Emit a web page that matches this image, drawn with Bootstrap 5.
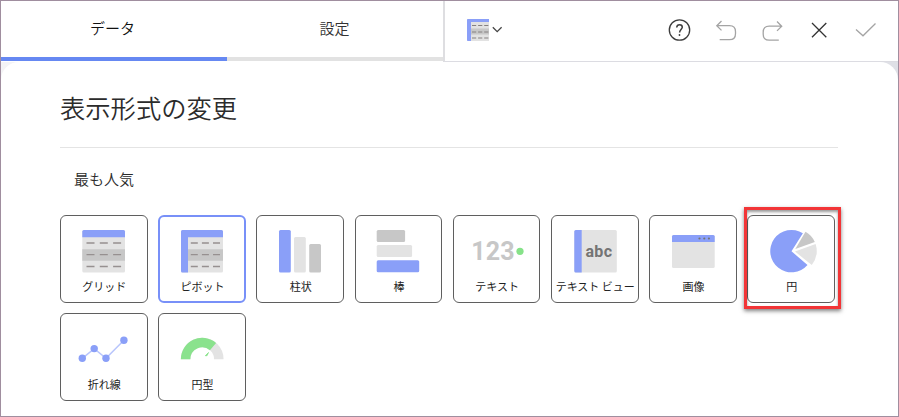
<!DOCTYPE html>
<html lang="ja">
<head>
<meta charset="utf-8">
<meta name="viewport" content="width=device-width, initial-scale=1">
<title>表示形式の変更</title>
<link href="https://cdn.jsdelivr.net/npm/bootstrap@5.3.0/dist/css/bootstrap.min.css" rel="stylesheet">
<style>
  body { font-family: "Noto Sans CJK JP", "Noto Sans", sans-serif; color: #2b2b2b; background: #fff; }
  .editor { width: 899px; height: 417px; border: 1px solid #a08e9f; background: linear-gradient(90deg, #f4f4f6 50%, #dfe0e6 50%); }
  .topbar { height: 61px; }
  .tabs { width: 442px; }
  .tabs .nav-link { height: 60px; padding: 0 0 3px; border-radius: 0; border-bottom: 4px solid #e2e2e2; font-size: 15px; line-height: 53px; color: #333; font-weight: 350; text-align: center; }
  .tabs .nav-link.active { background: none; color: #111; border-bottom-color: #6688f2; }
  .tab-data { width: 226px; padding-right: 3px !important; }
  .tab-settings { width: 216px; padding-right: 1px !important; }
  .tools { border-left: 2px solid #dedee1; border-bottom: 1px solid #dcdce2; }
  .tool { border: 0; background: none; padding: 0; line-height: 0; }
  .panel { height: 354px; border-radius: 18px 18px 0 0; padding: 0 59px; }
  .panel h1 { font-size: 25.3px; line-height: 36px; font-weight: 350; margin: 27px 0 0 0; }
  .rule { height: 1px; background: #e4e4e4; width: 778px; margin-top: 22px; }
  .panel h2 { font-size: 15px; line-height: 22px; font-weight: 350; margin: 20px 0 25px 14px; }
  .tiles { display: grid; grid-template-columns: repeat(8, 87.7px); gap: 10.5px; }
  .tile { position: relative; display: flex; flex-direction: column; align-items: center; height: 87.7px; border: 1px solid #5f5f5f; border-radius: 6px; padding: 0; background: #fff; color: #222; font-size: 11px; line-height: 20px; white-space: nowrap; }
  .tile svg { display: block; flex: none; width: 86px; height: 60px; }
  .tile span { padding-left: 1px; }
  .tile.selected { border: 2px solid #7890f8; }
  .tile.selected svg { margin-top: -1px; }
  .callout { position: absolute; left: -4px; top: -9px; width: 97px; height: 102px; border: 3px solid #f23537; box-shadow: 0 2px 4px rgba(0,0,0,.5), inset 0 2px 3px rgba(0,0,0,.4); pointer-events: none; }
</style>
<script src="https://cdn.jsdelivr.net/npm/bootstrap@5.3.0/dist/js/bootstrap.bundle.min.js"></script>
</head>
<body class="overflow-hidden">
<div class="editor overflow-hidden">
  <header class="topbar d-flex bg-white">
    <nav class="tabs nav flex-nowrap">
      <a class="nav-link active tab-data" href="#">データ</a>
      <a class="nav-link tab-settings" href="#">設定</a>
    </nav>
    <div class="tools flex-grow-1 d-flex align-items-start justify-content-between">
      <button class="tool" type="button" aria-label="表示形式">
        <svg width="60" height="58" viewBox="445 1 60 58" fill="none">
          <path d="M467 19h22v22h-22z" fill="#e2e2e2"/><path d="M471 28.500h18v6h-18z" fill="#c7c7c7"/>
          <path d="M468 19h21v3h-18v19h-3q-1 0-1-1V20q0-1 1-1z" fill="#8a9ff8"/>
          <path d="M472 25.500h16.500M472 32h16.500M472 38h16.500" stroke="#858080" stroke-dasharray="4.200 1.900"/>
          <path d="M492.800 27.300l4.400 4.300 4.400-4.300" stroke="#444" stroke-width="1.300"/>
        </svg>
      </button>
      <div class="d-flex">
        <button class="tool" type="button" aria-label="ヘルプ">
          <svg width="45" height="58" viewBox="657 1 45 58" fill="none" stroke="#3d3d3d" stroke-width="1.300">
            <circle cx="679.500" cy="30" r="10.200"/><path d="M676.700 27.500q.2-2.700 2.900-2.700t2.700 2.500c0 1.700-2.700 2.300-2.700 5.200" stroke-width="1.500"/><circle cx="679.500" cy="35" r=".9" fill="#3d3d3d" stroke="none"/>
          </svg>
        </button>
        <button class="tool" type="button" aria-label="元に戻す">
          <svg width="47" height="58" viewBox="702 1 47 58" fill="none" stroke="#a4a4a4" stroke-width="1.300">
            <path d="M721.500 21l-4.700 4.700 4.700 4.700M717 25.700h12.500q6 0 6 6v2q0 6-6 6h-9.800"/>
          </svg>
        </button>
        <button class="tool" type="button" aria-label="やり直し">
          <svg width="47" height="58" viewBox="749 1 47 58" fill="none" stroke="#a4a4a4" stroke-width="1.300">
            <path d="M777 21.500l4.700 4.700-4.700 4.700M781.500 26.200h-12.300q-6 0-6 6v2q0 6 6 6h9.600"/>
          </svg>
        </button>
        <button class="tool" type="button" aria-label="閉じる">
          <svg width="46" height="58" viewBox="796 1 46 58" fill="none" stroke="#333" stroke-width="1.300"><path d="M812 23l14.300 14.300M826.300 23L812 37.300"/></svg>
        </button>
        <button class="tool" type="button" aria-label="確定">
          <svg width="56" height="58" viewBox="842 1 56 58" fill="none" stroke="#a4a4a4" stroke-width="1.300"><path d="M856 29.500l7 6.300 12.500-12.300"/></svg>
        </button>
      </div>
    </div>
  </header>
  <main class="panel bg-white d-flow-root overflow-hidden">
    <h1>表示形式の変更</h1>
    <div class="rule"></div>
    <h2>最も人気</h2>
    <div class="tiles">
      <button class="tile" type="button">
        <svg viewBox="0 0 86 60"><rect x="21.300" y="14" width="42.700" height="42.500" rx="1.500" fill="#e3e3e3"/><path d="M21.300 33.300H64V44.700H21.300z" fill="#c7c7c7"/><path d="M21.300 21.300V15.500q0-1.500 1.500-1.500H62.500q1.500 0 1.500 1.500V21.300z" fill="#8a9ff8"/><path d="M25.500 27H60.500M25.500 38.700H60.500M25.500 50.500H60.500" stroke="#969090" stroke-width="1.300" stroke-dasharray="8 5.300"/></svg>
        <span>グリッド</span>
      </button>
      <button class="tile selected" type="button">
        <svg viewBox="0 0 86 60"><rect x="22" y="14" width="42" height="42.500" rx="1.500" fill="#e3e3e3"/><path d="M29 33.300H64V44.700H29z" fill="#c7c7c7"/><path d="M23.500 14H62.500q1.500 0 1.500 1.500V21.300H29V56.500H23.500q-1.500 0-1.500-1.500V15.500q0-1.500 1.500-1.500z" fill="#8a9ff8"/><path d="M31.800 27H61M31.800 38.700H61M31.800 50.500H61" stroke="#969090" stroke-width="1.300" stroke-dasharray="7 4.100"/></svg>
        <span>ピボット</span>
      </button>
      <button class="tile" type="button">
        <svg viewBox="0 0 86 60"><rect x="22" y="14" width="11.800" height="42.500" rx="1.500" fill="#8a9ff8"/><rect x="37" y="21" width="11.800" height="35.500" rx="1.500" fill="#e3e3e3"/><rect x="52.200" y="28" width="11.800" height="28.500" rx="1.500" fill="#c7c7c7"/></svg>
        <span>柱状</span>
      </button>
      <button class="tile" type="button">
        <svg viewBox="0 0 86 60"><rect x="21.700" y="14" width="28.400" height="12" rx="1.500" fill="#c7c7c7"/><rect x="21.700" y="29" width="35.400" height="12" rx="1.500" fill="#e3e3e3"/><rect x="21.700" y="44.300" width="42.500" height="12" rx="1.500" fill="#8a9ff8"/></svg>
        <span>棒</span>
      </button>
      <button class="tile" type="button">
        <svg viewBox="0 0 86 60"><text x="17.200" y="44" font-family="Roboto, sans-serif" font-weight="700" font-size="25" textLength="43.500" fill="#c7c7c7">123</text><circle cx="66" cy="35.300" r="3.600" fill="#86e289"/></svg>
        <span>テキスト</span>
      </button>
      <button class="tile" type="button">
        <svg viewBox="0 0 86 60"><rect x="22.300" y="14" width="42.500" height="42.500" rx="1.500" fill="#e3e3e3"/><path d="M29.700 14V56.500H23.800q-1.500 0-1.500-1.500V15.500q0-1.500 1.500-1.500z" fill="#8a9ff8"/><text x="33.500" y="41" font-family="Roboto, sans-serif" font-weight="700" font-size="16" textLength="26.500" fill="#747474">abc</text></svg>
        <span>テキスト ビュー</span>
      </button>
      <button class="tile" type="button">
        <svg viewBox="0 0 86 60"><rect x="22" y="19" width="42.700" height="33" rx="1.500" fill="#e3e3e3"/><path d="M22 26V20.500q0-1.500 1.500-1.500H63.200q1.500 0 1.500 1.500V26z" fill="#8a9ff8"/><g fill="#747474"><circle cx="49.500" cy="22.500" r="1.100"/><circle cx="54.300" cy="22.500" r="1.100"/><circle cx="58.900" cy="22.500" r="1.100"/></g></svg>
        <span>画像</span>
      </button>
      <button class="tile" type="button">
        <svg viewBox="0 0 86 60"><path d="M43.500 35.300L54.900 17.300A21.200 21.200 0 1 0 59.500 49z" fill="#8a9ff8"/><path d="M47.300 33L57.500 15.800Q63.800 19.300 66.800 26z" fill="#c7c7c7"/><path d="M47 35.600L67.600 28.100Q71.200 39 63.800 49z" fill="#e3e3e3"/></svg>
        <span>円</span>
        <div class="callout"></div>
      </button>
      <button class="tile" type="button">
        <svg viewBox="0 0 86 60"><path d="M21.300 44.300L33.200 34.600 45 44.300 62.900 26.300" fill="none" stroke="#b8c5fc" stroke-width="1.500"/><g fill="#8a9ff8"><circle cx="21.300" cy="44.300" r="3.700"/><circle cx="33.200" cy="34.600" r="3.700"/><circle cx="45" cy="44.300" r="3.700"/><circle cx="62.900" cy="26.300" r="3.700"/></g></svg>
        <span>折れ線</span>
      </button>
      <button class="tile" type="button">
        <svg viewBox="0 0 86 60"><path d="M26.600 45.200A16.600 16.600 0 0 1 59.800 45.200" fill="none" stroke="#e3e3e3" stroke-width="9.500"/><path d="M26.600 45.200A16.600 16.600 0 0 1 54 32.600" fill="none" stroke="#8ae28d" stroke-width="9.500"/><path d="M46.300 41.700L49.500 38.500 48 41.700z" fill="#86e289" stroke="#86e289" stroke-width=".8"/></svg>
        <span>円型</span>
      </button>
    </div>
  </main>
</div>
</body>
</html>
